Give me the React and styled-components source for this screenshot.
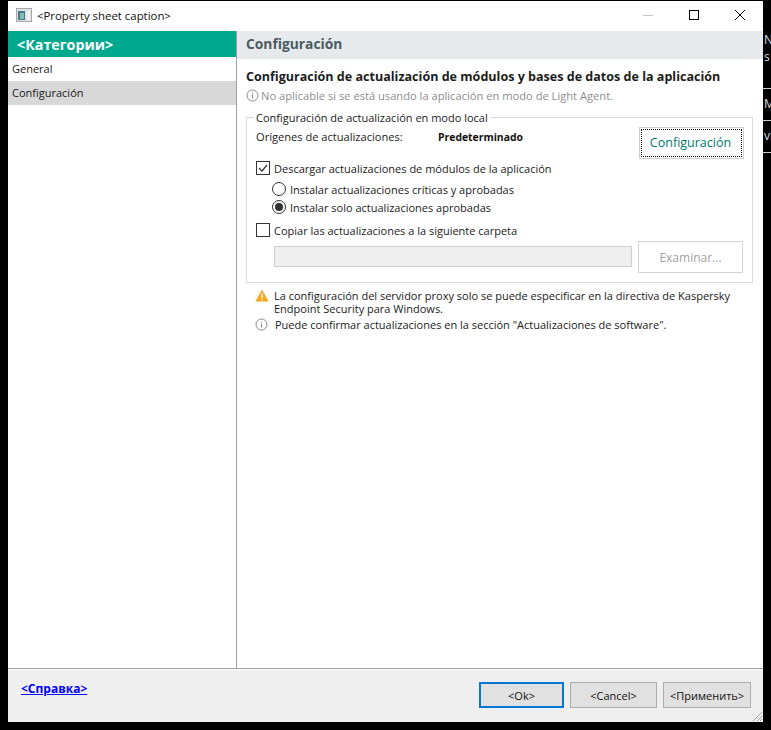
import styled, { createGlobalStyle } from 'styled-components'

const Global = createGlobalStyle`
  html, body { margin: 0; padding: 0; background: #000; }
  body { font-family: "Open Sans", "Noto Sans", sans-serif; font-size: 12px; color: #1d1d1b; }
`

const Screen = styled.div`
  display: flex;
  width: 771px;
  height: 730px;
  background: #000;
  overflow: hidden;
  padding: 1px 0 8px 8px;
  box-sizing: border-box;
`

const Win = styled.div`
  position: relative;
  display: flex;
  flex-direction: column;
  width: 755px;
  flex-shrink: 0;
  background: #fff;
`

const TitleBar = styled.div`
  display: flex;
  align-items: center;
  height: 30px;
  flex-shrink: 0;
  padding: 0 0 2px 8px;
  box-sizing: border-box;
  background: #fff;
`

const Caption = styled.span`
  margin-left: 5px;
  font-size: 11.4px;
  color: #111;
`

const WinControls = styled.div`
  display: flex;
  margin-left: auto;
`

const WinBtn = styled.div`
  display: flex;
  align-items: center;
  justify-content: center;
  width: 46px;
  height: 28px;
`

const Body = styled.div`
  display: flex;
  flex: 1;
  min-height: 0;
`

const Sidebar = styled.div`
  display: flex;
  flex-direction: column;
  width: 228px;
  flex-shrink: 0;
  border-right: 1px solid #a0a0a0;
`

const SideHead = styled.div`
  display: flex;
  align-items: center;
  height: 26px;
  padding-left: 9px;
  background: #00a88e;
  color: #fff;
  font-size: 14.3px;
  font-weight: 700;
`

const SideItem = styled.div`
  display: flex;
  align-items: center;
  height: 24px;
  padding: 0 0 2px 4px;
  box-sizing: border-box;
  font-size: 11px;
  color: #1a1a1a;
  background: ${p => (p.$active ? '#d8d8d8' : 'transparent')};
`

const Main = styled.div`
  flex: 1;
  display: flex;
  flex-direction: column;
  min-width: 0;
`

const MainHead = styled.div`
  display: flex;
  align-items: center;
  height: 28px;
  padding: 0 0 3px 9px;
  box-sizing: border-box;
  background: #e6eaec;
  color: #4d5a60;
  font-size: 13.8px;
  font-weight: 700;
`

const Content = styled.div`
  padding: 9px 10px 0 9px;
`

const Heading = styled.div`
  font-size: 12.55px;
  font-weight: 700;
  line-height: 17px;
  margin-bottom: 2px;
  color: #1d1d1b;
`

const NoteRow = styled.div`
  display: flex;
  align-items: center;
  gap: 2px;
  height: 16px;
  color: #8e8e8e;
  font-size: 11.15px;
`

const Group = styled.fieldset`
  margin: 8px 0 0;
  padding: 0 9px;
  height: 172px;
  box-sizing: border-box;
  border: 1px solid #dcdcdc;
  min-width: 0;
`

const GroupTitle = styled.legend`
  padding: 1px 2px 0;
  margin-left: -2px;
  font-size: 11px;
  line-height: 12px;
  color: #222;
`

const SourceRow = styled.div`
  display: flex;
  height: 35px;
  font-size: 11.1px;
  color: #222;
`

const SourceLabel = styled.span`
  width: 182px;
  margin-top: 6px;
  line-height: 14px;
`

const SourceValue = styled.span`
  margin-top: 6px;
  font-size: 10.4px;
  font-weight: 700;
  line-height: 14px;
  color: #111;
`

const GreenButton = styled.button`
  width: 105px;
  height: 32px;
  margin: 3px -1px 0 auto;
  background: #fff;
  border: 1px solid #cfcfcf;
  outline: 1px dotted #000;
  outline-offset: -3px;
  color: #007a70;
  font: 12.5px "Open Sans", sans-serif;
  padding: 0 2px 2px 0;
`

const OptionRow = styled.div`
  display: flex;
  align-items: center;
  gap: 4px;
  height: 18px;
  margin-left: ${p => p.$indent || 0}px;
  margin-top: ${p => p.$top || 0}px;
  font-size: 11px;
  color: #222;
`

const Check = styled.span`
  display: flex;
  align-items: center;
  justify-content: center;
  width: 12px;
  height: 12px;
  border: 1px solid #333;
  background: #fff;
  flex-shrink: 0;
`

const Radio = styled.span`
  display: flex;
  align-items: center;
  justify-content: center;
  width: 12px;
  height: 12px;
  border: 1px solid #333;
  border-radius: 50%;
  flex-shrink: 0;
  &::after {
    content: '';
    display: ${p => (p.$on ? 'block' : 'none')};
    width: 8px;
    height: 8px;
    border-radius: 50%;
    background: #333;
  }
`

const PathRow = styled.div`
  display: flex;
  align-items: center;
  margin-top: 2px;
  margin-left: 18px;
  margin-right: -1px;
  gap: 6px;
`

const PathInput = styled.div`
  width: 358px;
  height: 21px;
  margin-top: -1px;
  box-sizing: border-box;
  border: 1px solid #cfcfcf;
  background: #efefef;
`

const DisabledButton = styled.button`
  width: 105px;
  height: 32px;
  box-sizing: border-box;
  background: #fff;
  border: 1px solid #d4d4d4;
  color: #a3a3a3;
  font: 12px "Open Sans", sans-serif;
  padding: 0;
`

const Notes = styled.div`
  display: flex;
  flex-direction: column;
  margin-top: 6px;
  margin-left: 9px;
  font-size: 11px;
  line-height: 13px;
  color: #222;
`

const Note = styled.div`
  display: flex;
  gap: ${p => p.$gap || 6}px;
  margin-top: ${p => p.$top || 0}px;
`

const NoteIcon = styled.span`
  flex-shrink: 0;
  width: 13px;
  height: 13px;
`

const Footer = styled.div`
  display: flex;
  align-items: flex-start;
  height: 54px;
  flex-shrink: 0;
  border-top: 1px solid #a0a0a0;
  box-shadow: inset 0 1px 0 #fff;
  background: #efefef;
  padding: 13px 12px 0 13px;
  box-sizing: border-box;
`

const HelpLink = styled.a`
  color: #0000ff;
  font-size: 12px;
  font-weight: 700;
  text-decoration: underline;
  line-height: 14px;
`

const Actions = styled.div`
  display: flex;
  gap: 6px;
  margin-left: auto;
`

const DlgButton = styled.button`
  width: ${p => p.$w}px;
  height: 26px;
  box-sizing: border-box;
  background: #e1e1e1;
  border: ${p => (p.$primary ? '2px solid #0078d7' : '1px solid #adadad')};
  color: #111;
  font: 11px "Open Sans", sans-serif;
  padding: 0;
`

const Grip = styled.svg`
  position: absolute;
  right: 0;
  bottom: 0;
`

const SideStrip = styled.div`
  flex: 1;
  min-width: 0;
  display: flex;
  flex-direction: column;
  padding-top: 30px;
  color: #ddd;
  font-size: 12px;
  overflow: hidden;
  white-space: nowrap;
`

const StripCell = styled.div`
  height: ${p => p.$h}px;
  line-height: ${p => p.$lh}px;
  padding-left: 1px;
  box-sizing: border-box;
  border-bottom: 1px solid #cfcfcf;
`

const InfoIcon = ({ color = '#8a8a8a' }) => (
  <svg width="13" height="13" viewBox="0 0 13 13" fill="none">
    <circle cx="6.5" cy="6.5" r="5.5" stroke={color} />
    <rect x="6" y="5.5" width="1" height="4" fill={color} />
    <rect x="6" y="3.5" width="1" height="1" fill={color} />
  </svg>
)

const App = () => (
  <>
    <Global />
    <Screen>
      <Win>
        <TitleBar>
          <svg width="16" height="14" viewBox="0 0 16 14">
            <rect x="0.5" y="0.5" width="15" height="13" fill="#dfe3e5" stroke="#a8a8a8" />
            <rect x="2" y="3" width="7" height="9" fill="#3f7f8c" />
            <rect x="4" y="5" width="4" height="6" fill="#8fb7b0" />
            <rect x="11" y="3" width="3" height="9" fill="#f2f2f2" />
          </svg>
          <Caption>&lt;Property sheet caption&gt;</Caption>
          <WinControls>
            <WinBtn>
              <svg width="10" height="10" viewBox="0 0 10 10"><rect y="5" width="10" height="1" fill="#c8c8c8" /></svg>
            </WinBtn>
            <WinBtn>
              <svg width="10" height="10" viewBox="0 0 10 10" fill="none"><rect x="0.5" y="0.5" width="9" height="9" stroke="#000" /></svg>
            </WinBtn>
            <WinBtn>
              <svg width="10" height="10" viewBox="0 0 10 10" fill="none"><path d="M0 0L10 10M10 0L0 10" stroke="#000" strokeWidth="1" /></svg>
            </WinBtn>
          </WinControls>
        </TitleBar>
        <Body>
          <Sidebar>
            <SideHead>&lt;Категории&gt;</SideHead>
            <SideItem>General</SideItem>
            <SideItem $active>Configuración</SideItem>
          </Sidebar>
          <Main>
            <MainHead>Configuración</MainHead>
            <Content>
              <Heading>Configuración de actualización de módulos y bases de datos de la aplicación</Heading>
              <NoteRow>
                <InfoIcon />
                No aplicable si se está usando la aplicación en modo de Light Agent.
              </NoteRow>
              <Group>
                <GroupTitle>Configuración de actualización en modo local</GroupTitle>
                <SourceRow>
                  <SourceLabel>Orígenes de actualizaciones:</SourceLabel>
                  <SourceValue>Predeterminado</SourceValue>
                  <GreenButton>Configuración</GreenButton>
                </SourceRow>
                <OptionRow>
                  <Check>
                    <svg width="10" height="10" viewBox="0 0 10 10" fill="none"><path d="M1 5L4 8L9 2" stroke="#333" strokeWidth="1.2" /></svg>
                  </Check>
                  Descargar actualizaciones de módulos de la aplicación
                </OptionRow>
                <OptionRow $indent={16} $top={3}><Radio />Instalar actualizaciones críticas y aprobadas</OptionRow>
                <OptionRow $indent={16}><Radio $on />Instalar solo actualizaciones aprobadas</OptionRow>
                <OptionRow $top={5}><Check />Copiar las actualizaciones a la siguiente carpeta</OptionRow>
                <PathRow>
                  <PathInput />
                  <DisabledButton>Examinar...</DisabledButton>
                </PathRow>
              </Group>
              <Notes>
                <Note>
                  <NoteIcon>
                    <svg width="14" height="13" viewBox="0 0 14 13">
                      <path d="M7 0.5L13.6 12.5H0.4Z" fill="#f5a623" />
                      <rect x="6.4" y="4.5" width="1.3" height="4.5" fill="#fff" />
                      <rect x="6.4" y="9.8" width="1.3" height="1.3" fill="#fff" />
                    </svg>
                  </NoteIcon>
                  <span>La configuración del servidor proxy solo se puede especificar en la directiva de Kaspersky<br />Endpoint Security para Windows.</span>
                </Note>
                <Note $top={3} $gap={7}>
                  <NoteIcon><InfoIcon /></NoteIcon>
                  <span>Puede confirmar actualizaciones en la sección "Actualizaciones de software".</span>
                </Note>
              </Notes>
            </Content>
          </Main>
        </Body>
        <Footer>
          <HelpLink>&lt;Справка&gt;</HelpLink>
          <Actions>
            <DlgButton $w={85} $primary>&lt;Ok&gt;</DlgButton>
            <DlgButton $w={87}>&lt;Cancel&gt;</DlgButton>
            <DlgButton $w={88}>&lt;Применить&gt;</DlgButton>
          </Actions>
        </Footer>
        <Grip width="12" height="12" viewBox="0 0 12 12">
          <path d="M11 2L2 11M11 6L6 11M11 9L9 11" stroke="#a8a8a8" />
        </Grip>
      </Win>
      <SideStrip>
        <StripCell $h={58} $lh={17}>N<br />s</StripCell>
        <StripCell $h={32} $lh={30}>Ma</StripCell>
        <StripCell $h={32} $lh={30}>vi</StripCell>
      </SideStrip>
    </Screen>
  </>
)

export default App
